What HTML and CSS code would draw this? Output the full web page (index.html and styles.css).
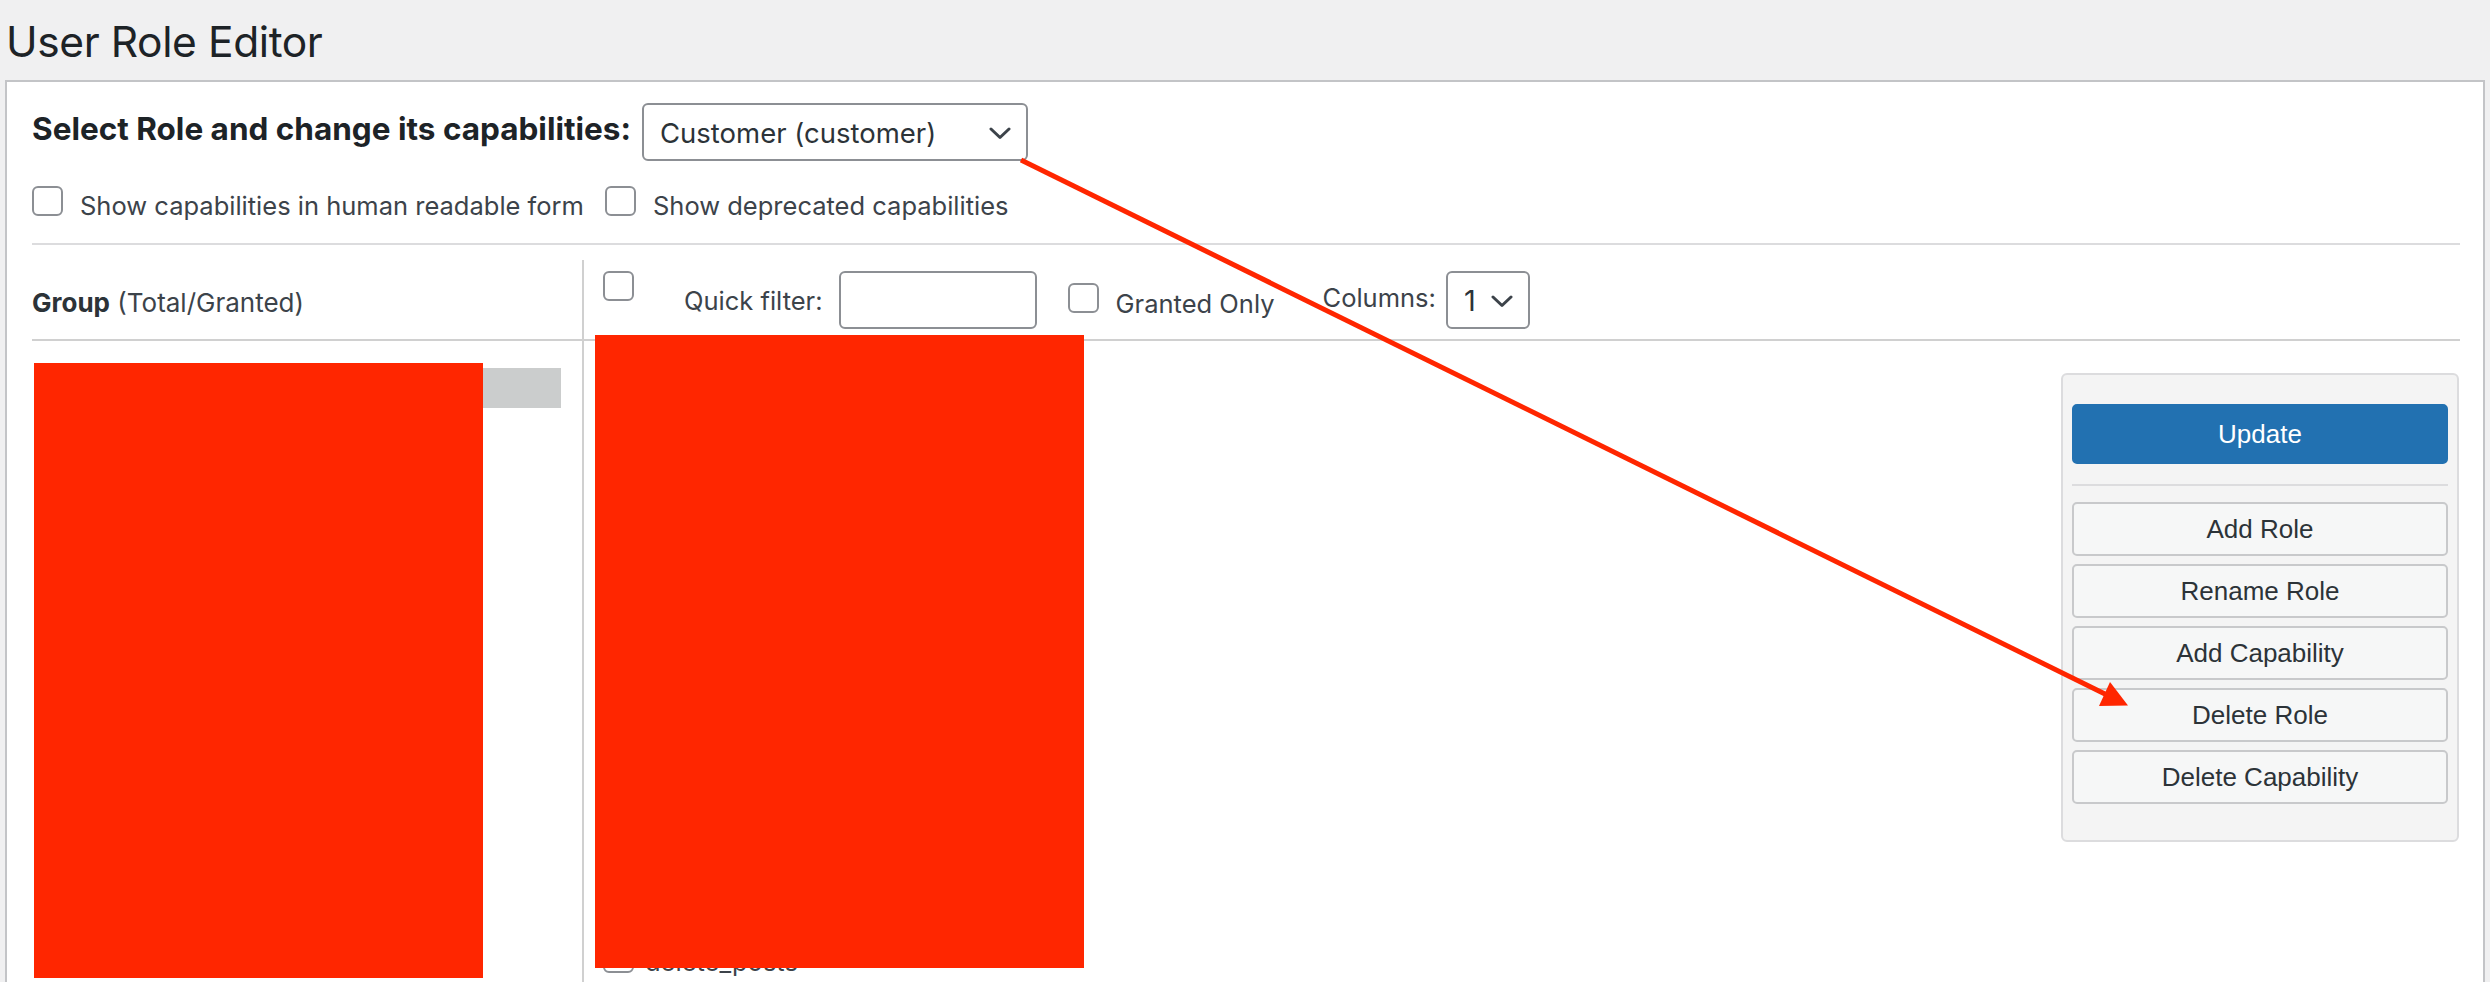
FILE: index.html
```html
<!DOCTYPE html>
<html lang="en">
<head>
<meta charset="utf-8">
<title>User Role Editor</title>
<link rel="stylesheet" href="styles.css">
</head>
<body>
<div class="page">
  <h1 class="title">User Role Editor</h1>
  <div class="box">
    <div class="role-row">
      <label class="role-label">Select Role and change its capabilities:</label>
      <div class="select role-select">
        <span class="select-value">Customer (customer)</span>
        <svg class="chev" width="22" height="13" viewBox="0 0 22 13"><polyline points="2,2 11,10.5 20,2" fill="none" stroke="#3c434a" stroke-width="3" stroke-linecap="round" stroke-linejoin="round"/></svg>
      </div>
    </div>
    <div class="opts">
      <label class="opt"><span class="cb"></span><span class="opt-text">Show capabilities in human readable form</span></label>
      <label class="opt"><span class="cb"></span><span class="opt-text">Show deprecated capabilities</span></label>
    </div>
    <div class="table">
      <div class="groups-col">
        <div class="col-head groups-head"><span class="group-title"><b>Group</b> (Total/Granted)</span></div>
        <div class="groups-body">
          <div class="group-item selected"></div>
        </div>
        <div class="redact redact-left"></div>
      </div>
      <div class="caps-col">
        <div class="col-head caps-head">
          <span class="cb cb-all"></span>
          <span class="head-label quick-label">Quick filter:</span>
          <span class="input quick-input"></span>
          <span class="cb cb-granted"></span>
          <span class="head-label granted-label">Granted Only</span>
          <span class="head-label columns-label">Columns:</span>
          <div class="select cols-select">
            <span class="select-value">1</span>
            <svg class="chev" width="22" height="13" viewBox="0 0 22 13"><polyline points="2,2 11,10.5 20,2" fill="none" stroke="#3c434a" stroke-width="3" stroke-linecap="round" stroke-linejoin="round"/></svg>
          </div>
        </div>
        <div class="caps-body">
          <div class="cap-list">
            <div class="cap-row"><span class="cb"></span><span class="cap-name">delete_posts</span></div>
          </div>
          <div class="panel">
            <button class="btn btn-primary">Update</button>
            <div class="panel-sep"></div>
            <button class="btn">Add Role</button>
            <button class="btn">Rename Role</button>
            <button class="btn">Add Capability</button>
            <button class="btn">Delete Role</button>
            <button class="btn">Delete Capability</button>
          </div>
        </div>
        <div class="redact redact-right"></div>
      </div>
    </div>
  </div>
  <svg class="arrow" width="2490" height="982" viewBox="0 0 2490 982">
    <line x1="1021" y1="160" x2="2106" y2="694.5" stroke="#ff2600" stroke-width="5"/>
    <polygon points="2110,682 2099,706 2128,705.5" fill="#ff2600"/>
  </svg>
</div>
</body>
</html>
```

FILE: styles.css
```css
* { box-sizing: border-box; }

html, body {
  margin: 0;
  padding: 0;
  width: 2490px;
  height: 982px;
  overflow: hidden;
  background: #f0f0f1;
  font-family: Inter, "Noto Sans", "Liberation Sans", sans-serif;
  color: #3c434a;
}

.page {
  position: relative;
  width: 2490px;
  height: 982px;
  overflow: hidden;
}

.title {
  margin: 0;
  height: 80px;
  padding: 15px 0 0 6px;
  font-size: 42.5px;
  line-height: 54px;
  font-weight: 400;
  color: #1d2327;
  letter-spacing: -0.4px;
}

.box {
  margin-left: 5px;
  width: 2480px;
  height: 902px;
  overflow: hidden;
  background: #fff;
  border: 2px solid #c3c4c7;
  border-bottom: none;
  padding: 21px 23px 0 25px;
}

/* role row */
.role-row {
  display: flex;
  align-items: flex-start;
  height: 58px;
}
.role-label {
  margin-top: 8px;
  margin-right: 11px;
  font-size: 31.5px;
  line-height: 36px;
  font-weight: 700;
  color: #1d2327;
}

.select {
  display: flex;
  align-items: center;
  justify-content: space-between;
  height: 58px;
  border: 2px solid #8c8f94;
  border-radius: 6px;
  background: #fff;
}
.role-select {
  width: 386px;
  padding: 0 15px 0 16px;
}
.role-select .select-value {
  font-size: 27.5px;
  color: #2c3338;
  margin-top: 2px;
}
.cols-select {
  width: 84px;
  padding: 0 15px 0 16px;
}
.cols-select .select-value {
  font-size: 29px;
  color: #2c3338;
  margin-top: 1px;
}
.chev { display: block; margin-top: 2px; }

/* checkbox */
.cb {
  display: block;
  flex: none;
  width: 31px;
  height: 30px;
  border: 2px solid #8c8f94;
  border-radius: 6px;
  background: #fff;
}

.opts {
  display: flex;
  align-items: flex-start;
  height: 36px;
  margin-top: 25px;
}
.opt {
  display: flex;
  align-items: flex-start;
  margin-right: 21px;
}
.opt-text {
  margin-left: 17px;
  margin-top: 4px;
  font-size: 25.5px;
  line-height: 32px;
}

/* table */
.table {
  margin-top: 21px;
  border-top: 2px solid #dcdcde;
  padding-top: 15px;
  display: grid;
  grid-template-columns: 550px 1fr;
  height: 740px;
}

.groups-col, .caps-col { position: relative; }

.col-head {
  height: 81px;
  border-bottom: 2px solid #d0d0d0;
}
.groups-head {
  padding-top: 27px;
  font-size: 26px;
  line-height: 32px;
  color: #3c434a;
}
.groups-head b { font-weight: 700; color: #2c3338; }

.caps-col { border-left: 2px solid #d0d0d0; }

.caps-head {
  display: flex;
  align-items: flex-start;
  padding: 11px 0 0 19px;
}
.head-label {
  font-size: 25.5px;
  line-height: 32px;
}
.quick-label { margin-left: 50px; margin-top: 14px; }
.input {
  display: block;
  width: 198px;
  height: 58px;
  border: 2px solid #8c8f94;
  border-radius: 6px;
  background: #fff;
}
.quick-input { margin-left: 16px; }
.cb-granted { margin-left: 31px; margin-top: 12px; }
.granted-label { margin-left: 17px; margin-top: 17px; }
.columns-label { margin-left: 48px; margin-top: 11px; }
.cols-select { margin-left: 10px; }

.groups-body { padding-top: 27px; }
.group-item {
  height: 40px;
  width: 527px;
  margin-left: 2px;
}
.group-item.selected { background: #cbcdcd; }

.caps-body {
  display: flex;
  justify-content: space-between;
  align-items: flex-start;
}
.cap-list {
  padding: 602px 0 0 19px;
}
.cap-row {
  display: flex;
  align-items: flex-start;
}
.cap-name {
  margin-left: 11px;
  margin-top: 3px;
  font-size: 25.5px;
  line-height: 32px;
  color: #3c434a;
}

/* action panel */
.panel {
  width: 398px;
  margin-top: 32px;
  margin-right: 1px;
  background: #f4f4f4;
  border: 2px solid #dcdcde;
  border-radius: 6px;
  padding: 29px 9px 36px 9px;
  display: flex;
  flex-direction: column;
  gap: 8px;
}
.panel-sep {
  height: 2px;
  background: #dcdcde;
  margin: 12px 0 8px;
}
.btn {
  display: block;
  width: 100%;
  height: 54px;
  margin: 0;
  padding: 0;
  font-family: "Liberation Sans", Arial, sans-serif;
  font-size: 26px;
  color: #2c3338;
  background: #f6f7f7;
  border: 2px solid #c8c9cb;
  border-radius: 5px;
}
.btn-primary {
  height: 60px;
  background: #2271b1;
  border-color: #2271b1;
  color: #fff;
}

/* redaction overlays */
.redact {
  position: absolute;
  background: #ff2600;
}
.redact-left {
  left: 2px;
  top: 103px;
  width: 449px;
  height: 615px;
}
.redact-right {
  left: 11px;
  top: 75px;
  width: 489px;
  height: 633px;
}

.arrow {
  position: absolute;
  left: 0;
  top: 0;
  pointer-events: none;
}
```
